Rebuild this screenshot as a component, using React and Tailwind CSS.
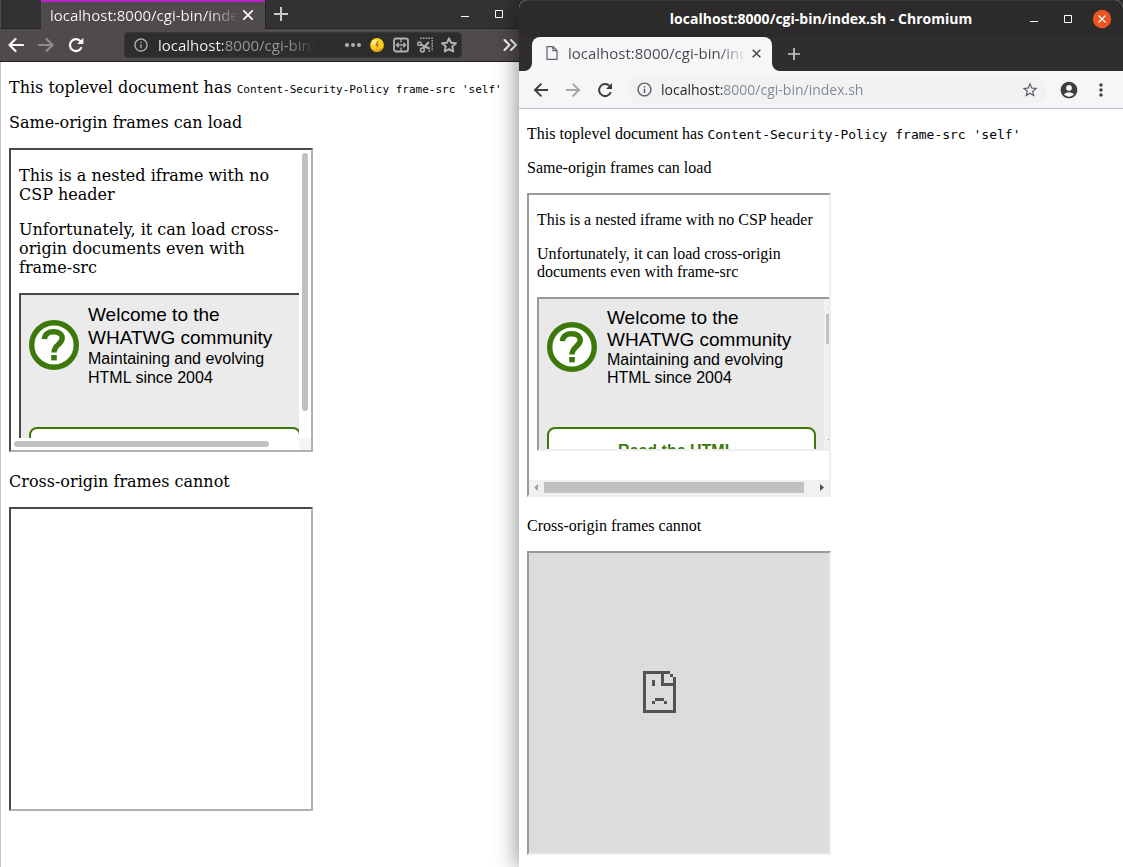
import React from "react";
import {
  MdInfoOutline,
  MdStarBorder,
  MdAccountCircle,
  MdMoreVert,
} from "react-icons/md";

function IconButton({ label, className = "", children }) {
  return (
    <button type="button" aria-label={label} className={`flex shrink-0 items-center justify-center ${className}`}>
      {children}
    </button>
  );
}

function QuestionLogo() {
  return (
    <svg viewBox="0 0 50 50" className="size-[50px] shrink-0" aria-hidden="true">
      <circle cx="25" cy="25" r="22.3" fill="#fff" stroke="#3c790a" strokeWidth="5.4" />
      <path
        d="M15.4 19.2C15.6 14.2 19.2 11.8 24.6 11.8C29.8 11.8 33.2 14.2 33.2 18.2C33.2 24 25 24.6 25 32.5"
        fill="none"
        stroke="#3c790a"
        strokeWidth="5.4"
      />
      <rect x="22.2" y="35" width="5.6" height="5.4" fill="#3c790a" />
    </svg>
  );
}

function MinimizeIcon() {
  return (
    <svg viewBox="0 0 10 10" className="size-[10px]" aria-hidden="true">
      <path d="M1 7.5H9" stroke="#fff" />
    </svg>
  );
}

function MaximizeIcon() {
  return (
    <svg viewBox="0 0 10 10" className="size-[10px]" aria-hidden="true">
      <path d="M1.5 1.5H8.5V8.5H1.5Z" stroke="#fff" fill="none" />
    </svg>
  );
}

function CloseIcon({ className }) {
  return (
    <svg viewBox="0 0 16 16" className={className} fill="none" stroke="currentColor" strokeWidth="1.9" aria-hidden="true">
      <path d="M3.3 3.3L12.7 12.7M12.7 3.3L3.3 12.7" />
    </svg>
  );
}

function PlusIcon({ className }) {
  return (
    <svg viewBox="0 0 14 14" className={className} fill="none" stroke="currentColor" strokeWidth="2" aria-hidden="true">
      <path d="M7 0V14M0 7H14" />
    </svg>
  );
}

function ArrowIcon({ flip = false }) {
  return (
    <svg viewBox="0 0 16 16" className={`size-4 ${flip ? "-scale-x-100" : ""}`} fill="none" stroke="currentColor" strokeWidth="2.2" strokeLinecap="round" strokeLinejoin="round" aria-hidden="true">
      <path d="M15 8H1.5M7.5 2L1.5 8L7.5 14" />
    </svg>
  );
}

function SharpArrowIcon({ flip = false }) {
  return (
    <svg viewBox="0 0 16 16" className={`size-4 ${flip ? "-scale-x-100" : ""}`} fill="none" stroke="currentColor" strokeWidth="2" aria-hidden="true">
      <path d="M15 8H2.2M8.4 1.6L2 8L8.4 14.4" />
    </svg>
  );
}

function FirefoxWindow() {
  return (
    <section className="flex min-w-0 flex-col overflow-hidden bg-white" aria-label="Firefox">
      <header className="border-b border-[#1f1c1e] bg-[#4f4a4d] font-['Open_Sans',sans-serif] text-[#f9f9fa]">
        <div className="flex h-[29px] items-stretch bg-[#323232]">
          <div className="w-[41px] border-b border-l border-b-[#252525] border-l-[#4f4a4d]" />
          <div className="flex w-[224px] items-center border-t-2 border-[#bb22c8] bg-[#4f4a4d] pb-0.5 pl-[9px]">
            <span className="w-[188px] overflow-hidden bg-linear-to-r from-[#f9f9fa] from-85% to-transparent bg-clip-text text-[15px] leading-5 whitespace-nowrap text-transparent">
              localhost:8000/cgi-bin/index.sh
            </span>
            <IconButton label="Close tab" className="size-5">
              <CloseIcon className="size-4" />
            </IconButton>
          </div>
          <div className="flex flex-1 items-center border-b border-l border-[#252525] pr-2">
            <IconButton label="New tab" className="size-[30px] text-[#c9c9ca]">
              <PlusIcon className="size-[14px]" />
            </IconButton>
            <IconButton label="Minimize" className="ml-auto size-6">
              <MinimizeIcon />
            </IconButton>
            <IconButton label="Maximize" className="ml-[10px] size-6">
              <MaximizeIcon />
            </IconButton>
          </div>
        </div>
        <div className="flex h-8 items-center pr-px pl-[6px]">
          <IconButton label="Back" className="size-5">
            <ArrowIcon />
          </IconButton>
          <IconButton label="Forward" className="ml-[10px] size-5 text-[#8f8b8d]">
            <ArrowIcon flip />
          </IconButton>
          <IconButton label="Reload" className="ml-[10px] size-5">
            <svg viewBox="0 0 16 16" className="size-4" fill="none" stroke="currentColor" strokeWidth="2.2" aria-hidden="true">
              <path d="M13.2 11A6 6 0 1 1 12.6 4.2" strokeLinecap="round" />
              <path d="M15.4 .8V7H9.2Z" fill="currentColor" stroke="none" />
            </svg>
          </IconButton>
          <div className="ml-[38px] flex h-[26px] max-w-[338px] flex-1 items-center gap-2 rounded-sm border border-[#3a3638] bg-[#2d2d2d] px-[3px] text-[#b1b1b3]">
            <IconButton label="Site information" className="ml-1 size-[18px]">
              <MdInfoOutline className="size-4" />
            </IconButton>
            <input
              aria-label="Address"
              readOnly
              value="localhost:8000/cgi-bin/index.sh"
              className="min-w-0 flex-1 bg-[linear-gradient(90deg,#f9f9fa_65px,#9a9a9c_65px,#9a9a9c_130px,transparent_158px)] bg-clip-text text-[15px] text-transparent outline-none"
            />
            <div className="ml-3 flex items-center gap-[6px]">
              <IconButton label="Page actions" className="size-[18px]">
                <svg viewBox="0 0 18 18" className="size-[18px]" fill="currentColor" aria-hidden="true">
                  <circle cx="3" cy="9" r="2" />
                  <circle cx="9" cy="9" r="2" />
                  <circle cx="15" cy="9" r="2" />
                </svg>
              </IconButton>
              <IconButton label="Lightning" className="size-[18px]">
                <svg viewBox="0 0 16 16" className="size-4" aria-hidden="true">
                  <circle cx="8" cy="8" r="6.9" fill="#fbd11c" />
                  <path d="M2.6 12.3A6.9 6.9 0 0 0 14.6 9.5C11 12.3 6.5 13.3 2.6 12.3Z" fill="#f5981d" />
                  <circle cx="6" cy="5.5" r="3" fill="#fff2a0" opacity=".8" />
                  <path d="M8.3 4L6.2 8.4H8L7.4 12L10 7.4H8.2L9.4 4Z" fill="#d5501c" />
                </svg>
              </IconButton>
              <IconButton label="Containers" className="size-[18px]">
                <svg viewBox="0 0 16 16" className="size-4" fill="none" stroke="currentColor" strokeWidth="1.8" aria-hidden="true">
                  <rect x="1" y="1.5" width="14" height="13" rx="2" />
                  <path d="M8 1.5V5.5M8 10.5V14.5M3.5 8H12.5M5.6 5.7L3.4 8L5.6 10.3M10.4 5.7L12.6 8L10.4 10.3" strokeWidth="1.3" />
                </svg>
              </IconButton>
              <IconButton label="Take a screenshot" className="size-[18px]">
                <svg viewBox="0 0 16 16" className="size-4" fill="none" stroke="currentColor" aria-hidden="true">
                  <path d="M3 1.2H16M15.2 3V14.5M11.5 14H14" strokeWidth="1.4" strokeDasharray="1.6 1.2" />
                  <circle cx="2.4" cy="6.8" r="1.7" strokeWidth="1.5" />
                  <circle cx="5.4" cy="13" r="1.9" strokeWidth="1.5" />
                  <path d="M3.9 7.6L12.8 11.8M6.3 11.2L11.8 5" strokeWidth="2.1" />
                </svg>
              </IconButton>
              <IconButton label="Bookmark this page" className="size-[18px]">
                <svg viewBox="0 0 16 16" className="size-4" fill="none" stroke="currentColor" strokeWidth="2" strokeLinejoin="round" aria-hidden="true">
                  <path d="M8 1.3L10 5.7L14.9 6.3L11.3 9.6L12.2 14.5L8 12.1L3.8 14.5L4.7 9.6L1.1 6.3L6 5.7Z" />
                </svg>
              </IconButton>
            </div>
          </div>
          <IconButton label="More tools" className="ml-auto size-4">
            <svg viewBox="0 0 16 16" className="size-4" fill="none" stroke="currentColor" strokeWidth="2" strokeLinecap="round" strokeLinejoin="round" aria-hidden="true">
              <path d="M2.5 3L7.5 8L2.5 13M9 3L14 8L9 13" />
            </svg>
          </IconButton>
        </div>
      </header>

      <main className="flex-1 border-l border-[#c6c6c6] px-2 py-4 font-['DejaVu_Serif',serif] text-base leading-[19px] text-black">
        <p className="whitespace-nowrap">
          This toplevel document has <code className="font-['DejaVu_Sans_Mono',monospace] text-[11px] leading-none">Content-Security-Policy frame-src 'self'</code>
        </p>
        <p className="mt-4">Same-origin frames can load</p>
        <div className="mt-4 grid h-[304px] w-[304px] grid-cols-[288px_12px] grid-rows-[288px_12px] border-2 border-t-[#4b474a] border-r-[#b1b1b1] border-b-[#b1b1b1] border-l-[#4b474a]">
          <div className="overflow-hidden px-2 py-4">
            <p>This is a nested iframe with no CSP header</p>
            <p className="mt-4">Unfortunately, it can load cross-origin documents even with frame-src</p>
            <div className="mt-4 h-[154px] w-[304px] overflow-hidden border-2 border-[#4b474a] bg-[#ebebeb] px-2 pt-2 font-['Liberation_Sans',sans-serif]">
              <div className="flex gap-[9px]">
                <div className="pt-[17px]">
                  <QuestionLogo />
                </div>
                <div>
                  <p className="text-[19px] leading-[23px]">Welcome to the<br />WHATWG community</p>
                  <p>Maintaining and evolving<br />HTML since 2004</p>
                </div>
              </div>
              <div className="mt-10 h-20 w-[272px] rounded-lg border-2 border-[#3c790a] bg-white" />
            </div>
          </div>
          <div className="px-[3px] pt-[3px]">
            <div className="h-[258px] w-[6px] rounded-full bg-[#c1c1c1]" />
          </div>
          <div className="px-[3px] pt-[3px]">
            <div className="h-[6px] w-[255px] rounded-full bg-[#c1c1c1]" />
          </div>
          <div className="bg-[#f4f5f8]" />
        </div>
        <p className="mt-5">Cross-origin frames cannot</p>
        <div className="mt-4 h-[304px] w-[304px] border-2 border-t-[#4b474a] border-r-[#b1b1b1] border-b-[#b1b1b1] border-l-[#4b474a]" />
      </main>
    </section>
  );
}

function ChromiumWindow() {
  return (
    <section className="z-10 flex min-w-0 flex-col rounded-t-lg bg-white shadow-[0_0_24px_rgba(0,0,0,0.5)]" aria-label="Chromium">
      <header className="font-['Open_Sans',sans-serif]">
        <div className="grid h-[37px] grid-cols-[1fr_auto_1fr] items-center rounded-t-lg border-t border-[#3b3939] bg-[#2c2a2b] text-white">
          <span />
          <h1 className="text-sm font-bold whitespace-nowrap">localhost:8000/cgi-bin/index.sh - Chromium</h1>
          <div className="flex items-center justify-end gap-[10px] pr-[9px]">
            <IconButton label="Minimize" className="size-6">
              <MinimizeIcon />
            </IconButton>
            <IconButton label="Maximize" className="size-6">
              <MaximizeIcon />
            </IconButton>
            <IconButton label="Close" className="size-6">
              <svg viewBox="0 0 20 20" className="size-5" aria-hidden="true">
                <circle cx="10" cy="10" r="9.2" fill="#ea5420" />
                <path d="M6.5 6.5L13.5 13.5M13.5 6.5L6.5 13.5" stroke="#fff" strokeWidth="1.2" />
              </svg>
            </IconButton>
          </div>
        </div>
        <div className="flex h-[34px] items-stretch bg-[#302d2e]">
          <div className="flex w-[13px] bg-[#f4f6f8]">
            <div className="flex-1 rounded-br-lg bg-[#302d2e]" />
          </div>
          <div className="flex w-[240px] items-center rounded-t-lg bg-[#f4f6f8] pb-0.5 pl-[14px] text-[#45474a]">
            <svg viewBox="0 0 12 16" className="h-4 w-3 shrink-0" fill="none" stroke="#5f6266" strokeWidth="1.2" aria-hidden="true">
              <path d="M1 1.6H7L11 5.6V14.4H1ZM7 1.6V5.6H11" />
            </svg>
            <span className="ml-[10px] w-[178px] overflow-hidden bg-linear-to-r from-[#45474a] from-85% to-transparent bg-clip-text text-[15px] leading-5 whitespace-nowrap text-transparent">
              localhost:8000/cgi-bin/index.sh
            </span>
            <IconButton label="Close tab" className="ml-0.5 size-4">
              <CloseIcon className="size-[13px]" />
            </IconButton>
          </div>
          <div className="flex flex-1 bg-[#f4f6f8]">
            <div className="flex flex-1 items-center rounded-bl-lg bg-[#302d2e] pl-3">
              <IconButton label="New tab" className="size-5 text-[#c9c8c8]">
                <PlusIcon className="size-3" />
              </IconButton>
            </div>
          </div>
        </div>
        <div className="flex h-[38px] items-center border-b border-[#bcc1cb] bg-[#f4f6f8] px-3 text-[#3d3e40]">
          <IconButton label="Back" className="size-5">
            <SharpArrowIcon />
          </IconButton>
          <IconButton label="Forward" className="ml-3 size-5 text-[#a5a6a8]">
            <SharpArrowIcon flip />
          </IconButton>
          <IconButton label="Reload" className="ml-3 size-5">
            <svg viewBox="0 0 16 16" className="size-4" fill="none" stroke="currentColor" strokeWidth="2" aria-hidden="true">
              <path d="M13.8 10A6 6 0 1 1 12.4 3.9" />
              <path d="M15 1V7H9Z" fill="currentColor" stroke="none" />
            </svg>
          </IconButton>
          <div className="ml-3 flex h-7 min-w-0 flex-1 items-center rounded-full bg-[#f0f2f4] px-2 text-[#5c5e62]">
            <IconButton label="Site information" className="size-[18px]">
              <MdInfoOutline className="size-[17px]" />
            </IconButton>
            <input
              aria-label="Address and search bar"
              readOnly
              value="localhost:8000/cgi-bin/index.sh"
              className="ml-2 min-w-0 flex-1 bg-[linear-gradient(90deg,#222426_61px,#84878b_61px)] bg-clip-text text-sm text-transparent outline-none"
            />
            <IconButton label="Bookmark this page" className="size-[18px]">
              <MdStarBorder className="size-[18px]" />
            </IconButton>
          </div>
          <IconButton label="Profile" className="ml-3 size-5">
            <MdAccountCircle className="size-5" />
          </IconButton>
          <IconButton label="Menu" className="ml-3 size-5">
            <MdMoreVert className="size-5" />
          </IconButton>
        </div>
      </header>

      <main className="flex-1 px-2 pt-4 pb-3 font-['Liberation_Serif',serif] text-base leading-[18px] text-black">
        <p>
          This toplevel document has <code className="font-['DejaVu_Sans_Mono',monospace] text-[13px] leading-none">Content-Security-Policy frame-src 'self'</code>
        </p>
        <p className="mt-4">Same-origin frames can load</p>
        <div className="mt-4 flex h-[304px] w-[304px] flex-col border-2 border-t-[#9a9a9a] border-r-[#eeeeee] border-b-[#eeeeee] border-l-[#9a9a9a]">
          <div className="flex-1 overflow-hidden px-2 pt-4">
            <p>This is a nested iframe with no CSP header</p>
            <p className="mt-4">Unfortunately, it can load cross-origin documents even with frame-src</p>
            <div className="mt-4 flex h-[154px] w-[304px] border-2 border-t-[#9a9a9a] border-r-[#eeeeee] border-b-[#eeeeee] border-l-[#9a9a9a] bg-[#e9e9e9] font-['Liberation_Sans',sans-serif]">
              <div className="w-[285px] shrink-0 overflow-hidden px-2 pt-2">
                <div className="flex gap-[10px]">
                  <div className="pt-[15px]">
                    <QuestionLogo />
                  </div>
                  <div>
                    <p className="text-[19px] leading-[22px]">Welcome to the<br />WHATWG community</p>
                    <p>Maintaining and evolving<br />HTML since 2004</p>
                  </div>
                </div>
                <div className="mt-10 h-20 rounded-lg border-2 border-[#3c790a] bg-white pt-[13px] pl-[69px] font-bold text-[#3c790a]">
                  Read the HTML
                </div>
              </div>
              <div className="flex w-[15px] shrink-0 flex-col items-center bg-[#f1f1f1]">
                <svg viewBox="0 0 15 15" className="size-[15px] shrink-0" aria-hidden="true">
                  <path d="M4 10H11L7.5 6Z" fill="#a3a3a3" />
                </svg>
                <div className="h-[30px] w-[11px] bg-[#c1c1c1]" />
                <svg viewBox="0 0 15 15" className="mt-auto size-[15px] shrink-0" aria-hidden="true">
                  <path d="M4 5H11L7.5 9Z" fill="#505050" />
                </svg>
              </div>
            </div>
          </div>
          <div className="flex h-[15px] items-center bg-[#f1f1f1]">
            <svg viewBox="0 0 15 15" className="size-[15px]" aria-hidden="true">
              <path d="M9 4V11L5 7.5Z" fill="#a3a3a3" />
            </svg>
            <div className="h-[11px] w-[260px] bg-[#c1c1c1]" />
            <svg viewBox="0 0 15 15" className="ml-auto size-[15px]" aria-hidden="true">
              <path d="M6 4V11L10 7.5Z" fill="#505050" />
            </svg>
          </div>
        </div>
        <p className="mt-5">Cross-origin frames cannot</p>
        <div className="mt-4 flex h-[304px] w-[304px] justify-center border-2 border-t-[#9a9a9a] border-r-[#eeeeee] border-b-[#eeeeee] border-l-[#9a9a9a] bg-[#dcdcdc] pt-[118px] pr-[39px]">
          <svg viewBox="0 0 11 14" className="h-[42px] w-[33px]" fill="#535353" shapeRendering="crispEdges" role="img" aria-label="Page unavailable">
            <path d="M0 0H9V1H10V2H11V14H0ZM1 1V13H10V5H6V1ZM7 1V4H10V2H9V1Z" fillRule="evenodd" />
            <path d="M3 3H4V5H3ZM4 9H7V10H4ZM3 10H4V11H3ZM7 10H8V11H7Z" />
          </svg>
        </div>
      </main>
    </section>
  );
}

export default function App() {
  return (
    <div className="grid min-h-screen grid-cols-[519fr_604fr] overflow-hidden bg-[#323232]">
      <FirefoxWindow />
      <ChromiumWindow />
    </div>
  );
}
